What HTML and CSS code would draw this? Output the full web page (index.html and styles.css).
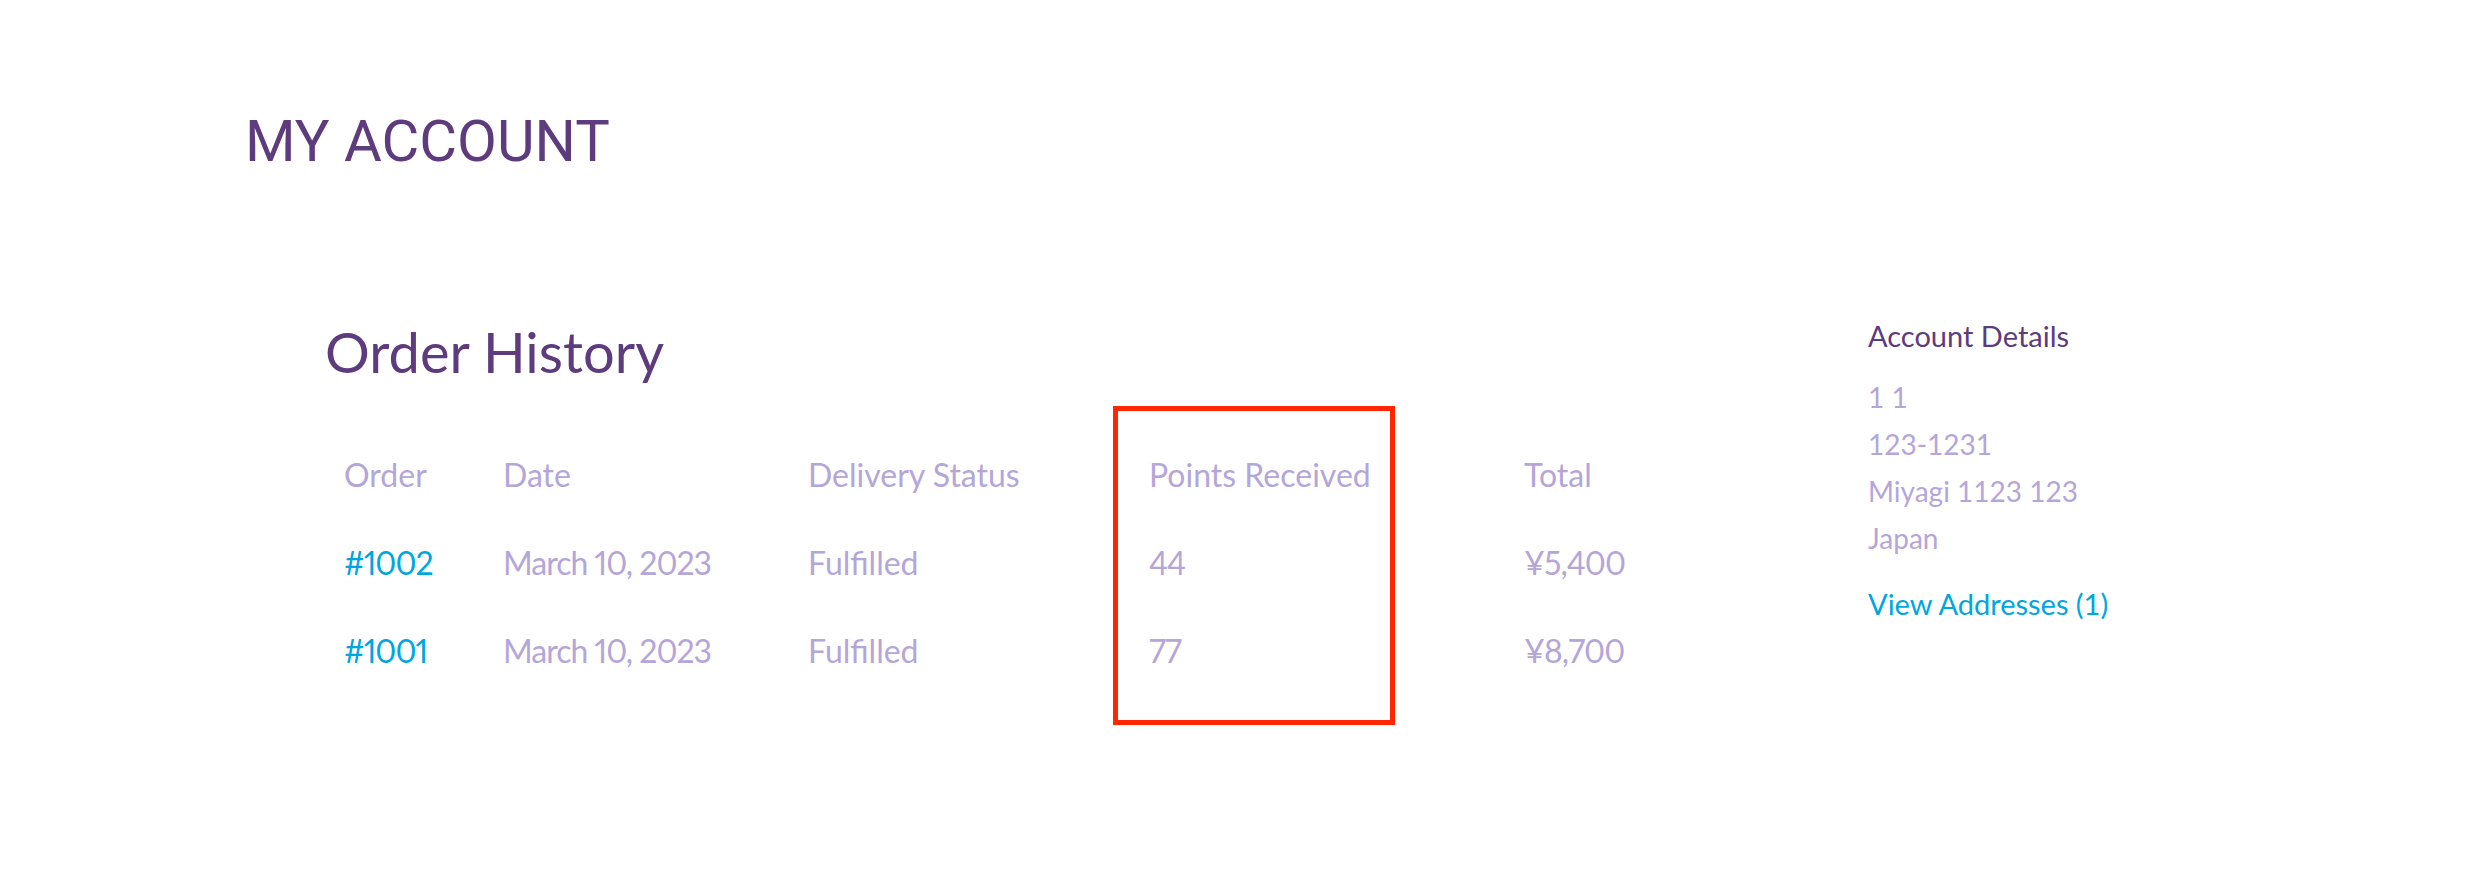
FILE: index.html
```html
<!DOCTYPE html>
<html lang="en">
<head>
<meta charset="utf-8">
<title>My Account</title>
<link rel="stylesheet" href="styles.css">
</head>
<body>
<div class="page">
  <h1 class="page-title">MY ACCOUNT</h1>
  <div class="content">
    <section class="orders">
      <h2 class="orders-title">Order History</h2>
      <table class="order-table">
        <colgroup>
          <col class="c-order"><col class="c-date"><col class="c-status"><col class="c-points"><col class="c-total">
        </colgroup>
        <thead>
          <tr><th>Order</th><th>Date</th><th>Delivery Status</th><th>Points Received</th><th>Total</th></tr>
        </thead>
        <tbody>
          <tr><td class="num"><a class="link" href="#">#1002</a></td><td class="num">March 10, 2023</td><td>Fulfilled</td><td class="num">44</td><td class="num">¥5,400</td></tr>
          <tr><td class="num"><a class="link" href="#">#1001</a></td><td class="num">March 10, 2023</td><td>Fulfilled</td><td class="num">77</td><td class="num">¥8,700</td></tr>
        </tbody>
      </table>
      <div class="highlight"></div>
    </section>
    <aside class="account">
      <h3 class="account-title">Account Details</h3>
      <div class="address">
        <div>1 1</div>
        <div>123-1231</div>
        <div>Miyagi 1123 123</div>
        <div>Japan</div>
      </div>
      <a class="link view-link" href="#">View Addresses (1)</a>
    </aside>
  </div>
</div>
</body>
</html>
```
FILE: styles.css
```css
html, body {
  margin: 0;
  padding: 0;
  background: #ffffff;
}
body {
  font-family: Lato, "Liberation Sans", sans-serif;
  color: #b4a6d9;
}
.page {
  padding-left: 245px;
}
.page-title {
  margin: 112px 0 0 0;
  font-family: Roboto, "Liberation Sans", sans-serif;
  font-weight: 400;
  font-size: 58px;
  line-height: 59px;
  color: #5d3b7d;
}
.content {
  margin-top: 145px;
  padding-left: 80px;
  display: grid;
  grid-template-columns: 1543px 1fr;
}
.orders {
  position: relative;
  padding-top: 7px;
  padding-bottom: 60px;
}
.orders-title {
  margin: 0;
  font-weight: 400;
  font-size: 56px;
  line-height: 58px;
  color: #5d3b7d;
}
.order-table {
  margin-top: 50px;
  border-collapse: collapse;
  table-layout: fixed;
  width: 1380px;
  font-variant-numeric: proportional-nums;
}
.c-order { width: 159px; }
.c-date { width: 305px; }
.c-status { width: 341px; }
.c-points { width: 375px; }
.c-total { width: 200px; }
.order-table th,
.order-table td {
  padding: 0 0 0 19px;
  text-align: left;
  font-weight: 400;
  font-size: 32px;
  line-height: 88px;
  color: #b4a6d9;
  white-space: nowrap;
}
.order-table td.num {
  letter-spacing: -1px;
}
.link {
  color: #00a6e0;
  text-decoration: none;
}
.highlight {
  position: absolute;
  z-index: 2;
  left: 788px;
  top: 90px;
  width: 282px;
  height: 319px;
  box-sizing: border-box;
  border: 5px solid #ff2600;
}
.account-title {
  margin: 0;
  font-weight: 400;
  font-size: 29px;
  line-height: 40px;
  color: #5d3b7d;
}
.address {
  margin-top: 18px;
  font-size: 28px;
  line-height: 47px;
}
.view-link {
  display: block;
  margin-top: 18px;
  font-size: 29px;
  line-height: 47px;
}
```
